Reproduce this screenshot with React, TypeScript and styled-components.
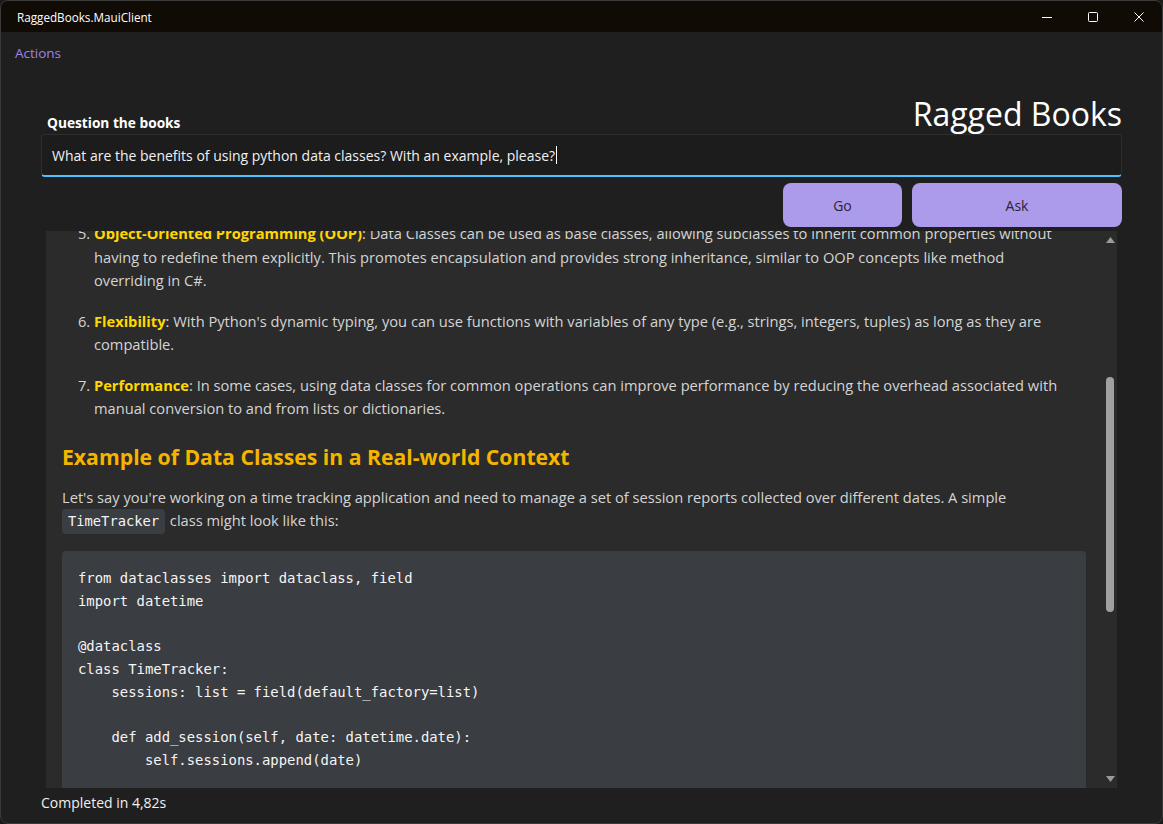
import React from 'react';
import styled, { createGlobalStyle } from 'styled-components';

const GlobalStyle = createGlobalStyle`
  html, body {
    margin: 0;
    padding: 0;
    width: 1163px;
    height: 824px;
    overflow: hidden;
    background: #1a1a1a;
  }
  * {
    box-sizing: border-box;
  }
`;

const uiFont = `"Segoe UI", "Open Sans", "Noto Sans", sans-serif`;
const monoFont = `"DejaVu Sans Mono", "Liberation Mono", monospace`;

const Window = styled.div`
  width: 1163px;
  height: 824px;
  border: 1px solid #3b3b3b;
  border-radius: 8px;
  overflow: hidden;
  display: flex;
  flex-direction: column;
  background: #1f1f1f;
  font-family: ${uiFont};
  color: #f2f2f2;
`;

const TitleBar = styled.div`
  height: 31px;
  flex: none;
  display: flex;
  align-items: center;
  background: #110b06;
  padding-left: 16px;
`;

const TitleText = styled.span`
  font-size: 11.7px;
  color: #ffffff;
`;

const WindowControls = styled.div`
  margin-left: auto;
  display: flex;
  height: 100%;
`;

const ControlButton = styled.div`
  width: 46px;
  height: 100%;
  display: flex;
  align-items: center;
  justify-content: center;
`;

const MenuBar = styled.div`
  height: 42px;
  flex: none;
  display: flex;
  align-items: center;
  padding-left: 14px;
`;

const MenuItem = styled.span`
  font-size: 13.5px;
  color: #9d85e6;
`;

const Main = styled.div`
  flex: 1;
  display: flex;
  flex-direction: column;
  padding: 0 40px;
`;

const HeaderRow = styled.div`
  height: 60px;
  display: flex;
  justify-content: space-between;
  align-items: flex-end;
`;

const FieldLabel = styled.label`
  font-size: 13.7px;
  font-weight: 700;
  line-height: 20px;
  padding: 0 0 1px 6px;
  color: #ffffff;
`;

const AppTitle = styled.h1`
  margin: 0;
  font-size: 32px;
  font-weight: 400;
  line-height: 40px;
  color: #ffffff;
`;

const QuestionBox = styled.div`
  height: 43px;
  display: flex;
  align-items: center;
  padding-left: 10px;
  background: #1c1c1c;
  border: 1px solid #2e2e2e;
  border-bottom: 2px solid #4cc2ff;
  border-radius: 4px;
  font-size: 14px;
  color: #f0f0f0;
`;

const Caret = styled.span`
  display: inline-block;
  width: 1px;
  height: 18px;
  margin-left: 1px;
  background: #ffffff;
`;

const ButtonRow = styled.div`
  margin-top: 6px;
  display: flex;
  justify-content: flex-end;
  gap: 10px;
`;

const ActionButton = styled.button<{ $width: number }>`
  width: ${(p) => p.$width}px;
  height: 44px;
  padding-top: 2px;
  border: none;
  border-radius: 8px;
  background: #ac9aea;
  color: #2a2438;
  font-family: ${uiFont};
  font-size: 14px;
  cursor: pointer;
`;

const Panel = styled.div`
  margin: 4px 5px 0;
  height: 557px;
  flex: none;
  display: flex;
  background: #2b2b2b;
`;

const Content = styled.div`
  flex: 1;
  overflow: hidden;
  padding: 0 14px 0 16px;
  color: #d4d4d4;
  font-size: 14.67px;
  line-height: 23.5px;
`;

const Scrolled = styled.div`
  margin-top: -9px;
`;

const List = styled.ol`
  margin: 0;
  padding-left: 32px;
`;

const Item = styled.li`
  white-space: nowrap;
  & + & {
    margin-top: 17px;
  }
`;

const Term = styled.strong`
  color: #ffd800;
  font-weight: 700;
`;

const SectionHeading = styled.h3`
  margin: 22px 0 15px;
  font-size: 21.2px;
  line-height: 28px;
  font-weight: 700;
  color: #f4b400;
`;

const Paragraph = styled.p`
  margin: 0 0 17px;
  white-space: nowrap;
`;

const InlineCode = styled.code`
  display: inline-block;
  font-family: ${monoFont};
  font-size: 13.75px;
  line-height: 25px;
  padding: 0 6px;
  margin-right: 1px;
  border-radius: 4px;
  background: #3a3d41;
  color: #f5f5f5;
`;

const CodeBlock = styled.pre`
  margin: 0;
  padding: 16px;
  border-radius: 4px;
  background: #3a3d41;
  font-family: ${monoFont};
  font-size: 13.9px;
  line-height: 22.75px;
  color: #f5f5f5;
`;

const ScrollTrack = styled.div`
  width: 17px;
  flex: none;
  display: flex;
  flex-direction: column;
  align-items: center;
  padding: 6px 0 6px 3px;
`;

const ScrollArrow = styled.svg`
  flex: none;
`;

const ThumbLane = styled.div`
  flex: 1;
  display: flex;
  flex-direction: column;
  align-items: center;
  padding-top: 134px;
`;

const Thumb = styled.div`
  width: 8px;
  height: 235px;
  border-radius: 4px;
  background: #a0a0a0;
`;

const StatusBar = styled.div`
  padding-top: 4px;
  font-size: 14px;
  line-height: 22px;
  color: #f0f0f0;
`;

const code = `from dataclasses import dataclass, field
import datetime

@dataclass
class TimeTracker:
    sessions: list = field(default_factory=list)

    def add_session(self, date: datetime.date):
        self.sessions.append(date)
    `;

const App: React.FC = () => {
  return (
    <>
      <GlobalStyle />
      <Window>
        <TitleBar>
          <TitleText>RaggedBooks.MauiClient</TitleText>
          <WindowControls>
            <ControlButton>
              <svg width="10" height="10" viewBox="0 0 10 10">
                <path d="M0 5.5h10" stroke="#fff" strokeWidth="1" />
              </svg>
            </ControlButton>
            <ControlButton>
              <svg width="10" height="10" viewBox="0 0 10 10">
                <rect x="0.5" y="0.5" width="9" height="9" rx="1" fill="none" stroke="#fff" strokeWidth="1" />
              </svg>
            </ControlButton>
            <ControlButton>
              <svg width="10" height="10" viewBox="0 0 10 10">
                <path d="M0.5 0.5l9 9M9.5 0.5l-9 9" stroke="#fff" strokeWidth="1" />
              </svg>
            </ControlButton>
          </WindowControls>
        </TitleBar>

        <MenuBar>
          <MenuItem>Actions</MenuItem>
        </MenuBar>

        <Main>
          <HeaderRow>
            <FieldLabel>Question the books</FieldLabel>
            <AppTitle>Ragged Books</AppTitle>
          </HeaderRow>
          <QuestionBox>
            What are the benefits of using python data classes? With an example, please?
            <Caret />
          </QuestionBox>
          <ButtonRow>
            <ActionButton $width={119}>Go</ActionButton>
            <ActionButton $width={210}>Ask</ActionButton>
          </ButtonRow>

          <Panel>
            <Content>
              <Scrolled>
                <List start={5}>
                  <Item>
                    <Term>Object-Oriented Programming (OOP)</Term>: Data Classes can be used as base classes, allowing subclasses to inherit common properties without
                    <br />
                    having to redefine them explicitly. This promotes encapsulation and provides strong inheritance, similar to OOP concepts like method
                    <br />
                    overriding in C#.
                  </Item>
                  <Item>
                    <Term>Flexibility</Term>: With Python's dynamic typing, you can use functions with variables of any type (e.g., strings, integers, tuples) as long as they are
                    <br />
                    compatible.
                  </Item>
                  <Item>
                    <Term>Performance</Term>: In some cases, using data classes for common operations can improve performance by reducing the overhead associated with
                    <br />
                    manual conversion to and from lists or dictionaries.
                  </Item>
                </List>
                <SectionHeading>Example of Data Classes in a Real-world Context</SectionHeading>
                <Paragraph>
                  Let's say you're working on a time tracking application and need to manage a set of session reports collected over different dates. A simple
                  <br />
                  <InlineCode>TimeTracker</InlineCode> class might look like this:
                </Paragraph>
                <CodeBlock>{code}</CodeBlock>
              </Scrolled>
            </Content>
            <ScrollTrack>
              <ScrollArrow width="9" height="6" viewBox="0 0 9 6">
                <path d="M4.5 0L9 6H0z" fill="#9a9a9a" />
              </ScrollArrow>
              <ThumbLane>
                <Thumb />
              </ThumbLane>
              <ScrollArrow width="9" height="6" viewBox="0 0 9 6">
                <path d="M0 0h9L4.5 6z" fill="#9a9a9a" />
              </ScrollArrow>
            </ScrollTrack>
          </Panel>

          <StatusBar>Completed in 4,82s</StatusBar>
        </Main>
      </Window>
    </>
  );
};

export default App;
